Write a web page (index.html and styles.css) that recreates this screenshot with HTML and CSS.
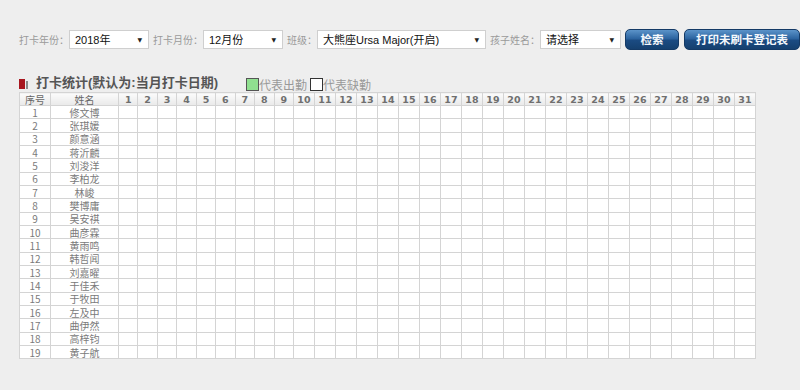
FILE: index.html
```html
<!DOCTYPE html>
<html lang="zh-CN">
<head>
    <meta charset="UTF-8">
    <title>打卡统计</title>
    <link rel="stylesheet" href="styles.css">
</head>
<body>
    <div class="toolbar">
        <span class="lbl">打卡年份：</span>
        <div class="sel sel-year"><span>2018年</span><i class="arrow">▼</i></div>
        <span class="lbl">打卡月份：</span>
        <div class="sel sel-month"><span>12月份</span><i class="arrow">▼</i></div>
        <span class="lbl">班级：</span>
        <div class="sel sel-class"><span>大熊座Ursa Major(开启)</span><i class="arrow">▼</i></div>
        <span class="lbl">孩子姓名：</span>
        <div class="sel sel-child"><span>请选择</span><i class="arrow">▼</i></div>
        <button class="btn btn-search">检索</button>
        <button class="btn btn-print">打印未刷卡登记表</button>
    </div>

    <div class="titlebar">
        <span class="mark"></span><span class="mark-bar"></span>
        <h2 class="title">打卡统计(默认为:当月打卡日期)</h2>
        <span class="legend"><span class="box box-on"></span>代表出勤</span>
        <span class="legend"><span class="box box-off"></span>代表缺勤</span>
    </div>

    <table class="grid">
        <thead>
            <tr id="cabecera">
                <th class="c-no">序号</th>
                <th class="c-name">姓名</th>
            </tr>
        </thead>
        <tbody id="cuerpo"></tbody>
    </table>

    <script>
        const alumnos = ['修文博', '张琪媛', '颜意涵', '蒋沂麟', '刘浚洋', '李柏龙', '林峻', '樊博庸', '吴安祺', '曲彦霖',
            '黄雨鸣', '韩哲闻', '刘嘉曜', '于佳禾', '于牧田', '左及中', '曲伊然', '高梓钧', '黄子航'];
        const dias = 31;

        const cabecera = document.getElementById('cabecera');
        for (let d = 1; d <= dias; d++) {
            const th = document.createElement('th');
            th.className = d < 10 ? 'day c-d1' : 'day c-d2';
            th.textContent = d;
            cabecera.appendChild(th);
        }

        const cuerpo = document.getElementById('cuerpo');
        alumnos.forEach(function(nombre, i) {
            const tr = document.createElement('tr');
            let html = '<td>' + (i + 1) + '</td><td>' + nombre + '</td>';
            for (let d = 1; d <= dias; d++) {
                html += '<td></td>';
            }
            tr.innerHTML = html;
            cuerpo.appendChild(tr);
        });
    </script>
</body>
</html>
```

FILE: styles.css
```css
body {
    margin: 0;
    background-color: #eeeeee;
    font-family: "Liberation Sans", "Noto Sans CJK SC", sans-serif;
    color: #666;
}
.toolbar {
    display: flex;
    align-items: center;
    padding: 28px 0 0 19px;
    height: 22px;
}
.lbl {
    font-family: "Noto Sans CJK SC", sans-serif;
    font-size: 10px;
    color: #9a9a9a;
    white-space: nowrap;
}
.sel {
    display: flex;
    align-items: center;
    justify-content: space-between;
    box-sizing: border-box;
    height: 19px;
    margin-right: 4px;
    padding: 0 6px 0 5px;
    background-color: #fff;
    border: 1px solid #cfcfcf;
    font-size: 11px;
    color: #111;
    white-space: nowrap;
}
.sel-year { width: 80px; }
.sel-month { width: 80px; }
.sel-class { width: 169px; }
.sel-child { width: 81px; }
.arrow {
    font-style: normal;
    font-family: "DejaVu Sans", sans-serif;
    font-size: 6px;
    color: #222;
}
.btn {
    box-sizing: border-box;
    height: 21px;
    margin-right: 5px;
    padding: 0;
    border: 1px solid #143a66;
    border-radius: 5px;
    background: linear-gradient(#5b93c9 0%, #2c64a0 45%, #1b4b82 55%, #15406f 100%);
    color: #f4f8fc;
    font-family: "Noto Sans CJK SC", sans-serif;
    font-size: 11.5px;
    font-weight: bold;
    cursor: pointer;
}
.btn-search { width: 54px; }
.btn-print { width: 116px; margin-right: 0; }

.titlebar {
    display: flex;
    align-items: flex-end;
    height: 18px;
    margin: 24px 0 0 19px;
}
.mark {
    width: 6px;
    height: 10px;
    margin-bottom: 3px;
    background-color: #a8161e;
}
.mark-bar {
    width: 2px;
    height: 8px;
    margin: 0 8px 3px 1px;
    background-color: #8a8a8a;
}
.title {
    margin: 0 28px 0 0;
    font-family: "Liberation Sans", "Noto Sans CJK SC", sans-serif;
    font-size: 13px;
    line-height: 18px;
    font-weight: bold;
    color: #555;
}
.legend {
    display: flex;
    align-items: flex-end;
    font-family: "Noto Sans CJK SC", sans-serif;
    font-size: 12px;
    line-height: 15px;
    color: #999;
    margin-right: 3px;
}
.box {
    box-sizing: border-box;
    width: 13px;
    height: 13px;
    margin-bottom: 1px;
    border: 1px solid #333;
}
.box-on { background-color: #90e090; border-color: #555; }
.box-off { background-color: #fff; }

.grid {
    margin-left: 19px;
    border-collapse: collapse;
    table-layout: fixed;
    width: 736px;
    background-color: #fff;
    font-family: "Noto Sans CJK SC", sans-serif;
    font-size: 10px;
    color: #7a7a7a;
}
.grid th,
.grid td {
    padding: 0;
    border: 1px solid #d4d4d4;
    text-align: center;
    line-height: 11px;
    overflow: hidden;
    white-space: nowrap;
}
.grid tr {
    height: 13.33px;
}
.grid thead tr {
    height: 13px;
}
.grid th {
    background: linear-gradient(#fbfbfb, #e9e9e9);
    font-weight: normal;
    color: #666;
}
.grid th.day {
    font-family: "DejaVu Sans", sans-serif;
    font-weight: bold;
    font-size: 9.5px;
    color: #6f6f6f;
}
.c-no { width: 30px; }
.c-name { width: 67px; }
.c-d1 { width: 18.44px; }
.c-d2 { width: 20px; }
```
